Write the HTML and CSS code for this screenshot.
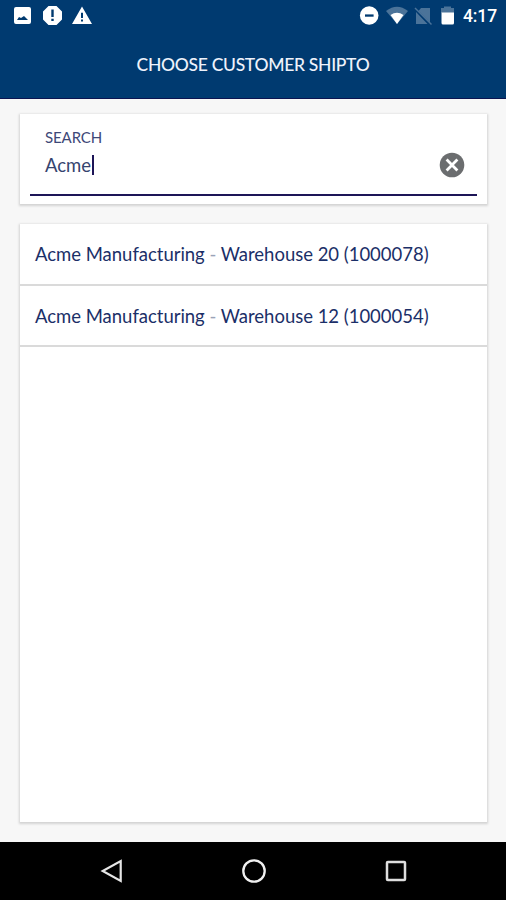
FILE: index.html
```
<!DOCTYPE html>
<html lang="en">
<head>
    <meta charset="UTF-8">
    <meta name="viewport" content="width=device-width, initial-scale=1.0">
    <title>Choose Customer Shipto</title>
    <link rel="stylesheet" href="styles.css">
</head>
<body>
    <header class="header">
        <div class="status-bar">
            <svg class="status-icons" width="100" height="32" viewBox="0 0 100 32">
                <path fill="#fff" fill-rule="evenodd" d="M16 7h13q2 0 2 2v13q0 2-2 2H16q-2 0-2-2V9q0-2 2-2zM17 20h11l-4-4-3 2-2-1z"/>
                <path fill="#fff" fill-rule="evenodd" d="M48.500 6h8l5.500 5.500v8L56.500 25h-8L43 19.500v-8zM51.300 9.500v7.500h2.400V9.500zM51.300 18.700v2.400h2.400v-2.400z"/>
                <path fill="#fff" fill-rule="evenodd" d="M82 6.500L92 24H72zM81 12.800v5.200h2v-5.200zM81 19.500v2h2v-2z"/>
            </svg>
            <div class="status-right">
                <svg width="100" height="32" viewBox="356 0 100 32">
                    <circle cx="369.200" cy="15.500" r="9.300" fill="#fff"/>
                    <path fill="#003a70" d="M365 14.400h8.600v2.300H365z"/>
                    <path fill="#4b7399" d="M386 11q11-8.500 22 0L397 24z"/>
                    <path fill="#fff" d="M390.500 15q6.500-4.500 13 0L397 24z"/>
                    <path fill="#4b7399" d="M421 8h9v14.500L418.500 11zM416 12l11.500 12H416z"/>
                    <path stroke="#4b7399" stroke-width="1.500" d="M415 8l16.500 16.500"/>
                    <path fill="#4b7399" d="M444 6.500h7V8h3v5h-13V8h3z"/>
                    <path fill="#fff" d="M441.500 12.500h12.500V23q0 1.500-1.500 1.500H443q-1.500 0-1.500-1.500z"/>
                </svg>
                <span class="clock">4:17</span>
            </div>
        </div>
        <h1 class="title">CHOOSE CUSTOMER SHIPTO</h1>
    </header>

    <main class="content">
        <section class="card search">
            <div class="search-field">
                <div class="search-text">
                    <div class="search-label">SEARCH</div>
                    <div class="search-value"><span>Acme</span><i class="caret"></i></div>
                </div>
                <svg class="clear" width="26" height="26" viewBox="0 0 26 26">
                    <circle cx="13" cy="13" r="12.300" fill="#6b6d6f"/>
                    <path stroke="#fff" stroke-width="2.800" d="M7.600 7.600l10.800 10.800M18.400 7.600L7.600 18.400"/>
                </svg>
            </div>
        </section>

        <section class="card results">
            <div class="result">Acme Manufacturing <span class="dash">-</span> Warehouse 20 (1000078)</div>
            <div class="result">Acme Manufacturing <span class="dash">-</span> Warehouse 12 (1000054)</div>
        </section>
    </main>

    <nav class="nav-bar">
        <svg width="24" height="26" viewBox="0 0 24 26">
            <path fill="none" stroke="#e6e6e6" stroke-width="2.200" d="M20.700 3v20L2.700 13z"/>
        </svg>
        <svg width="26" height="26" viewBox="0 0 26 26">
            <circle cx="13" cy="13" r="10.700" fill="none" stroke="#f0f0f0" stroke-width="2.300"/>
        </svg>
        <svg width="24" height="26" viewBox="0 0 24 26">
            <rect x="3" y="4" width="18" height="18" rx="0.800" fill="none" stroke="#dedede" stroke-width="2.500"/>
        </svg>
    </nav>
</body>
</html>
```

FILE: styles.css
```
* {
    box-sizing: border-box;
}
body {
    margin: 0;
    height: 900px;
    display: flex;
    flex-direction: column;
    background-color: #f7f7f7;
    font-family: Lato, sans-serif;
    color: #1b2f68;
}
svg {
    display: block;
    flex: none;
}
.header {
    height: 99px;
    background-color: #003a70;
    border-bottom: 1px solid #0b1450;
    color: #fff;
}
.status-bar {
    height: 32px;
    display: flex;
    justify-content: space-between;
}
.status-right {
    display: flex;
    width: 150px;
}
.clock {
    padding-left: 7px;
    font: 500 17.5px/32px Roboto, sans-serif;
    letter-spacing: -0.1px;
}
.title {
    margin: 0;
    padding-top: 21px;
    font-size: 17.5px;
    font-weight: 500;
    letter-spacing: -0.3px;
    line-height: 24px;
    text-align: center;
    color: #eef2fb;
}
.content {
    flex: 1;
    display: flex;
    flex-direction: column;
    gap: 20px;
    padding: 15px 19px 20px 20px;
}
.card {
    background-color: #fff;
    box-shadow: 0 1px 2px 1px #d4d4d4;
}
.search {
    height: 90px;
    padding: 0 10px;
}
.search-field {
    height: 82px;
    display: flex;
    justify-content: space-between;
    padding: 13px 12px 0 15px;
    border-bottom: 2px solid #1d1557;
}
.search-label {
    font-size: 15px;
    letter-spacing: -0.1px;
    line-height: 20px;
    color: #3d4878;
}
.search-value {
    display: flex;
    align-items: center;
    height: 35px;
    font-size: 18.5px;
    color: #35446f;
}
.caret {
    width: 2px;
    height: 20px;
    margin-left: 1px;
    background-color: #1d1557;
}
.clear {
    margin-top: 25px;
}
.results {
    flex: 1;
}
.result {
    height: 61.5px;
    padding-left: 15px;
    border-bottom: 2px solid #dadada;
    font-size: 18.5px;
    letter-spacing: -0.02px;
    line-height: 61px;
    white-space: nowrap;
}
.dash {
    color: #9aa3b8;
}
.nav-bar {
    height: 58px;
    display: flex;
    justify-content: space-between;
    align-items: center;
    padding: 0 98px 0 100px;
    background-color: #000;
}
```
